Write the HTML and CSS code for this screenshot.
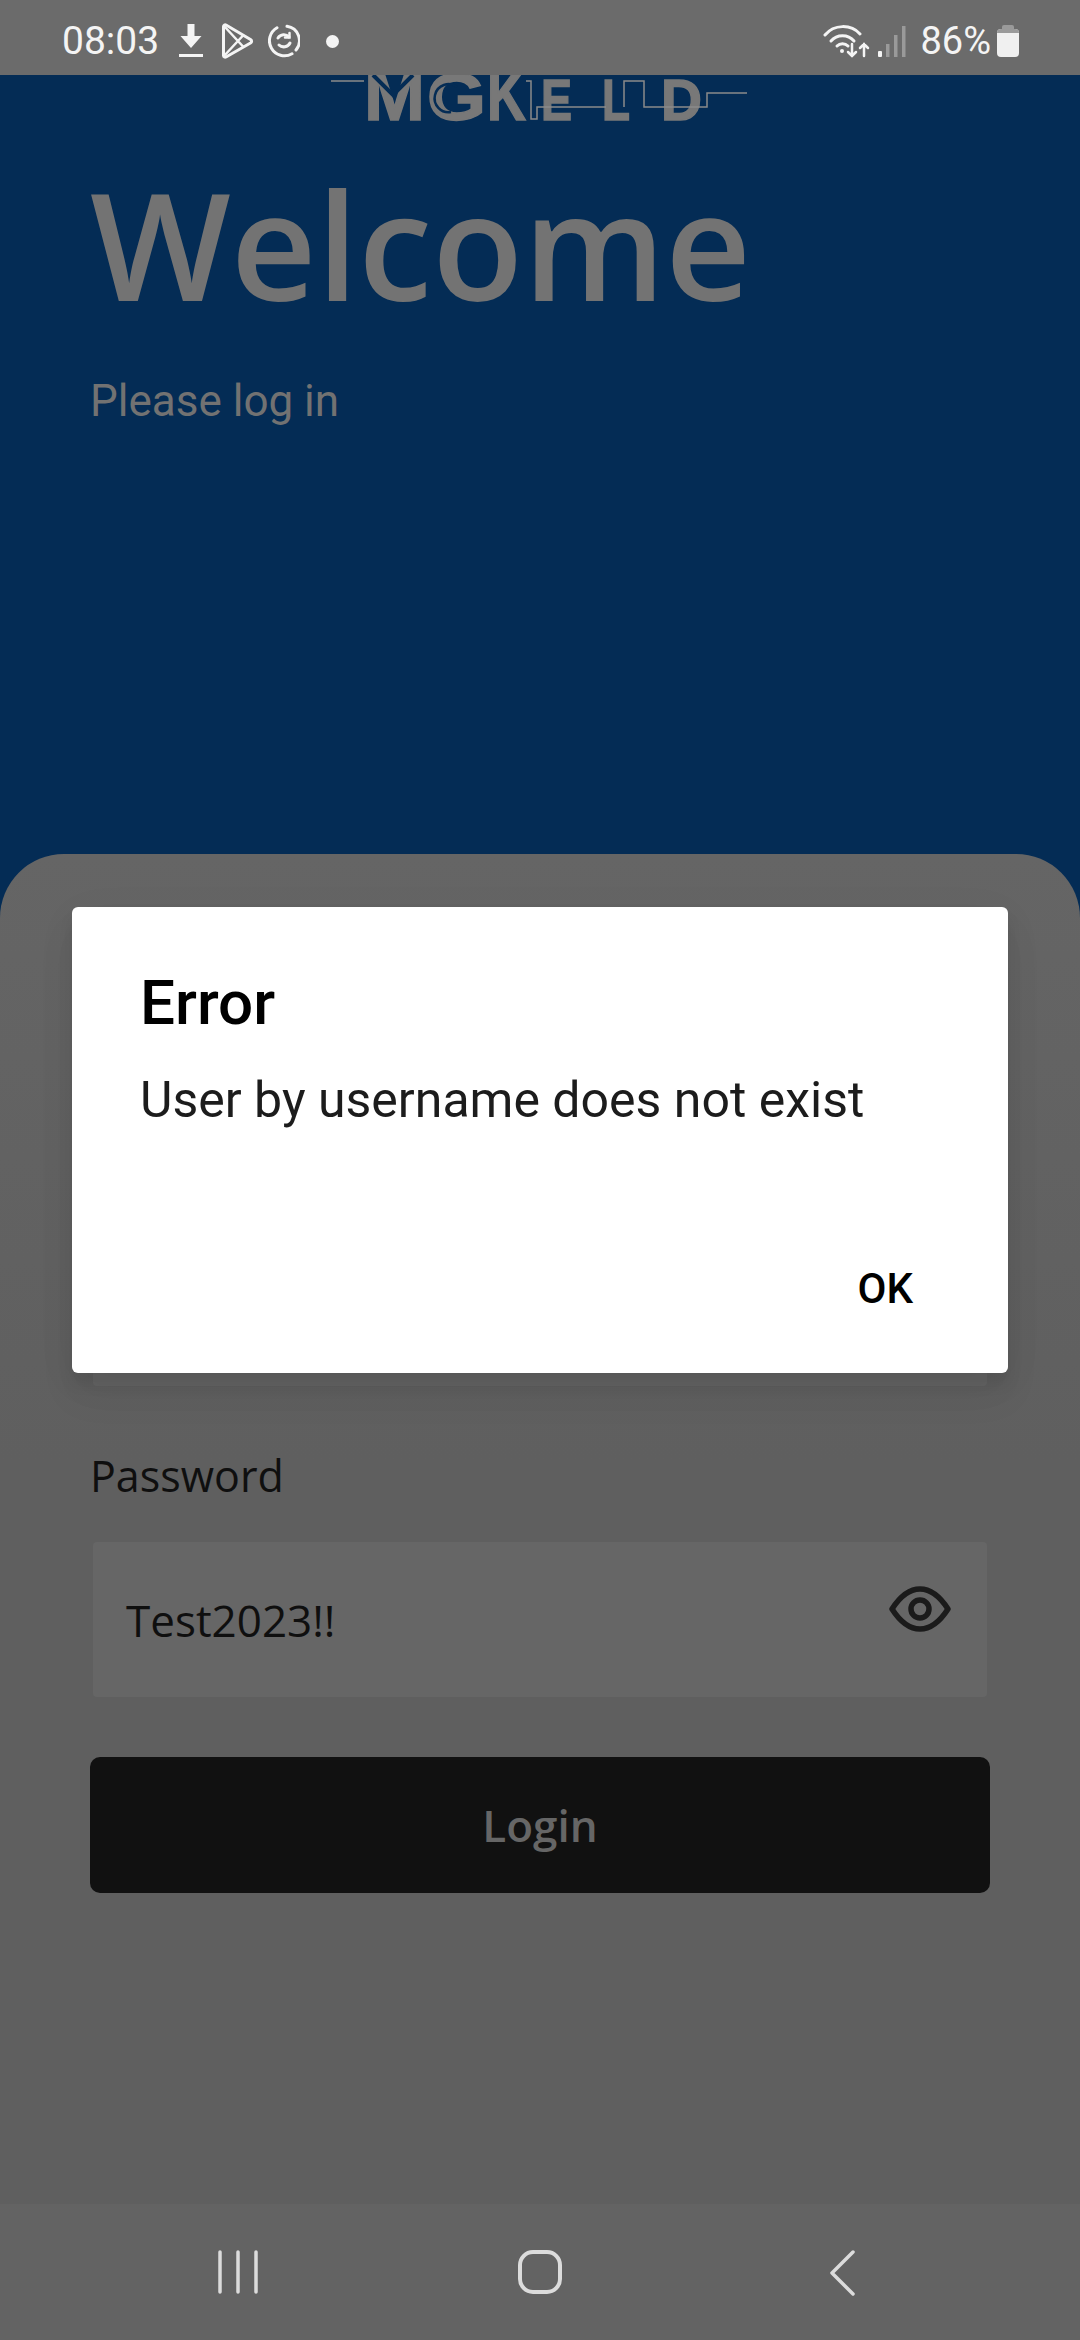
FILE: index.html
```html
<!DOCTYPE html>
<html lang="en">
<head>
    <meta charset="UTF-8">
    <meta name="viewport" content="width=device-width, initial-scale=1.0">
    <title>Login</title>
    <link rel="stylesheet" href="styles.css">
</head>
<body>
    <div class="status-bar">
        <div class="status-left">
            <span class="time">08:03</span>
            <svg class="ic-download" width="26" height="36" viewBox="0 0 26 36">
                <path d="M9.500 1h7v12h7L13 25 2.500 13h7z" fill="#f4f4f4"/>
                <rect x="1" y="31" width="24" height="3" fill="#f4f4f4"/>
            </svg>
            <svg class="ic-play" width="34" height="36" viewBox="0 0 33 36" fill="none" stroke="#f4f4f4" stroke-width="3" stroke-linejoin="round">
                <path d="M3 3.500c0-1.500 1.500-2 2.500-1.500L30 16.500c1.500 1 1.500 2.500 0 3.500L5.500 34c-1 .5-2.500 0-2.500-1.500z"/>
                <path d="M3.500 3L23 24M3.500 33L23 12" stroke-width="2.500"/>
            </svg>
            <svg class="ic-sync" width="32" height="34" viewBox="0 0 32 34" fill="none" stroke="#f4f4f4" stroke-width="3" stroke-linecap="round">
                <path d="M19 2.300A14.500 14.500 0 0 1 28 26"/>
                <path d="M24 29.800A14.500 14.500 0 0 1 9 3.700"/>
                <path d="M21 13a7 7 0 0 0-11 1M11 21a7 7 0 0 0 11-2"/>
                <path d="M17 13.500h4.500V9" stroke-width="2.500"/>
            </svg>
            <span class="dot"></span>
        </div>
        <div class="status-right">
            <svg class="ic-wifi" width="47" height="34" viewBox="0 0 47 34" fill="none" stroke="#f4f4f4" stroke-width="3" stroke-linecap="round">
                <path d="M2 11C11 0 28 0 37 10"/>
                <path d="M8 17c6-7 17-7 23 0"/>
                <path d="M14 22c3-3 8-3 11 0"/>
                <circle cx="19" cy="27" r="2" fill="#f4f4f4" stroke="none"/>
                <path d="M29 20v12m-4-4l4 4 4-4M41 32V20m-4 4l4-4 4 4" stroke-width="2.500"/>
            </svg>
            <svg class="ic-signal" width="28" height="32" viewBox="0 0 28 32">
                <rect x="0" y="26" width="4" height="6" rx="1" fill="#f4f4f4"/>
                <rect x="8" y="19" width="3.500" height="13" fill="#9a9a9a"/>
                <rect x="16" y="10" width="3.500" height="22" fill="#9a9a9a"/>
                <rect x="24" y="1" width="3.500" height="31" fill="#9a9a9a"/>
            </svg>
            <span class="battery-text">86%</span>
            <div class="battery"><div class="battery-fill"></div></div>
        </div>
    </div>

    <div class="hero">
        <svg class="logo" width="420" height="60" viewBox="0 0 420 60">
            <g class="logo-letters">
                <text x="33" y="45" font-size="72" textLength="61" lengthAdjust="spacingAndGlyphs">M</text>
                <text x="96" y="45" font-size="66" textLength="59" lengthAdjust="spacingAndGlyphs">G</text>
                <text x="156" y="45" font-size="72" textLength="39" lengthAdjust="spacingAndGlyphs">K</text>
                <text x="210" y="45" font-size="58" textLength="31" lengthAdjust="spacingAndGlyphs">E</text>
                <text x="271" y="45" font-size="58" textLength="28" lengthAdjust="spacingAndGlyphs">L</text>
                <text x="330" y="45" font-size="58" textLength="41" lengthAdjust="spacingAndGlyphs">D</text>
            </g>
            <path d="M42 0L62 20 82 0" fill="none" stroke="#042c55" stroke-width="4"/>
            <path d="M126 12A14 14 0 1 0 120 37" fill="none" stroke="#042c55" stroke-width="2.500"/>
            <path d="M0 6H33M195 6H200V44H206V32H275M293 32V6H313V32H376V18H416" fill="none" stroke="#8a8a8a" stroke-width="1.500"/>
        </svg>
        <h1 class="welcome">Welcome</h1>
        <p class="subtitle">Please log in</p>
    </div>

    <div class="sheet">
        <div class="field">
            <div class="label">Username</div>
            <div class="input"></div>
        </div>
        <div class="field">
            <div class="label">Password</div>
            <div class="input">
                <span class="input-text">Test2023!!</span>
                <svg class="ic-eye" width="62" height="46" viewBox="0 0 62 46" fill="none" stroke="#1b1b1b" stroke-width="5.500">
                    <path d="M3 23C12 9 21 3 31 3s19 6 28 20c-9 14-18 20-28 20S12 37 3 23z" stroke-linejoin="round"/>
                    <circle cx="31" cy="23" r="9"/>
                </svg>
            </div>
        </div>
        <button class="login-btn">Login</button>
    </div>

    <div class="nav-bar">
        <svg width="40" height="44" viewBox="0 0 40 44" stroke="#dcdcdc" stroke-width="3.500" stroke-linecap="round">
            <path d="M2 2v40M20 2v40M38 2v40"/>
        </svg>
        <svg width="44" height="44" viewBox="0 0 44 44" fill="none" stroke="#dcdcdc" stroke-width="4">
            <rect x="2" y="2" width="40" height="40" rx="13"/>
        </svg>
        <svg width="26" height="46" viewBox="0 0 26 46" fill="none" stroke="#dcdcdc" stroke-width="3.500" stroke-linecap="round" stroke-linejoin="round">
            <path d="M24 2L3 23l21 21"/>
        </svg>
    </div>

    <div class="dialog">
        <h2 class="dialog-title">Error</h2>
        <p class="dialog-text">User by username does not exist</p>
        <div class="dialog-actions">
            <button class="dialog-btn">OK</button>
        </div>
    </div>
</body>
</html>
```

FILE: styles.css
```css
* {
    box-sizing: border-box;
}
html, body {
    margin: 0;
    padding: 0;
}
body {
    position: relative;
    display: flex;
    flex-direction: column;
    width: 1080px;
    height: 2340px;
    overflow: hidden;
    background: #042c55;
    font-family: 'Open Sans', sans-serif;
}

/* status bar */
.status-bar {
    position: relative;
    z-index: 1;
    display: flex;
    justify-content: space-between;
    align-items: center;
    height: 75px;
    padding: 7px 61px 0 62px;
    background: #6b6b6b;
    color: #f4f4f4;
    font-family: Roboto, sans-serif;
}
.status-left, .status-right {
    display: flex;
    align-items: center;
}
.time {
    font-size: 39px;
    width: 94px;
}
.ic-download {
    margin-left: 22px;
}
.ic-play {
    margin-left: 16px;
}
.ic-sync {
    margin-left: 14px;
}
.dot {
    width: 13px;
    height: 13px;
    margin-left: 26px;
    border-radius: 50%;
    background: #f4f4f4;
}
.ic-signal {
    margin-left: 8px;
}
.battery-text {
    margin-left: 14px;
    font-size: 38px;
}
.battery {
    position: relative;
    width: 22px;
    height: 28px;
    margin: 3px 0 0 6px;
    border-radius: 4px;
    background: #f0f0f0;
}
.battery::before {
    content: "";
    position: absolute;
    top: -4px;
    left: 5px;
    width: 12px;
    height: 4px;
    border-radius: 2px 2px 0 0;
    background: #9a9a9a;
}
.battery-fill {
    height: 4px;
    border-radius: 4px 4px 0 0;
    background: #9a9a9a;
}

/* blue header, the logo runs up under the status bar */
.hero {
    height: 779px;
    padding: 0 90px;
    background: #042c55;
}
.logo {
    display: block;
    margin: 0 auto;
    overflow: visible;
    transform: translateX(1px);
}
.logo-letters {
    font-family: 'Liberation Sans', sans-serif;
    font-weight: 700;
    fill: #787878;
    stroke: #787878;
    stroke-width: 1.5px;
}
.welcome {
    margin: 7px 0 0;
    font-size: 149px;
    font-weight: 600;
    line-height: 204px;
    color: #737373;
}
.subtitle {
    margin: 30px 0 0;
    font-family: Roboto, sans-serif;
    font-size: 44px;
    line-height: 50px;
    color: #727272;
}

/* form sheet */
.sheet {
    flex: 1;
    padding: 281px 90px 0;
    border-radius: 64px 64px 0 0;
    background: linear-gradient(#656565, #5f5f5f 45%);
}
.field {
    margin-bottom: 60px;
}
.label {
    margin-bottom: 36px;
    font-size: 43px;
    line-height: 60px;
    color: #0f0f0f;
}
.input {
    display: flex;
    justify-content: space-between;
    align-items: center;
    height: 155px;
    margin: 0 3px;
    padding: 0 34px;
    border-radius: 4px;
    background: #666;
}
.input-text {
    font-size: 44px;
    color: #0f0f0f;
    margin-left: -1px;
}
.ic-eye {
    margin: 0 2px 21px 0;
}
.login-btn {
    display: block;
    width: 100%;
    height: 136px;
    border: 0;
    border-radius: 10px;
    background: #111;
    font-family: 'Open Sans', sans-serif;
    font-size: 44px;
    font-weight: 600;
    color: #666;
}

/* navigation */
.nav-bar {
    display: grid;
    grid-template-columns: repeat(3, 302px);
    justify-content: center;
    justify-items: center;
    height: 136px;
    padding-top: 46px;
    background: #636363;
}

/* alert on top of the page */
.dialog {
    position: absolute;
    left: 72px;
    top: 907px;
    display: flex;
    flex-direction: column;
    width: 936px;
    height: 466px;
    padding: 58px 68px 54px;
    border-radius: 6px;
    background: #fff;
    box-shadow: 0 24px 38px rgba(0,0,0,0.05), 0 9px 46px rgba(0,0,0,0.04), 0 11px 15px rgba(0,0,0,0.07);
}
.dialog-title {
    margin: 0;
    font-family: Roboto, sans-serif;
    font-size: 62px;
    font-weight: 500;
    line-height: 76px;
    color: #000;
}
.dialog-text {
    margin: 27px 0 0;
    font-family: Roboto, sans-serif;
    font-size: 50px;
    line-height: 64px;
    color: #1c1c1c;
}
.dialog-actions {
    display: flex;
    justify-content: flex-end;
    margin-top: auto;
}
.dialog-btn {
    padding: 0;
    border: 0;
    background: none;
    font-family: Roboto, sans-serif;
    font-size: 42px;
    font-weight: 500;
    line-height: 60px;
    color: #000;
    margin-right: 27px;
}
```
